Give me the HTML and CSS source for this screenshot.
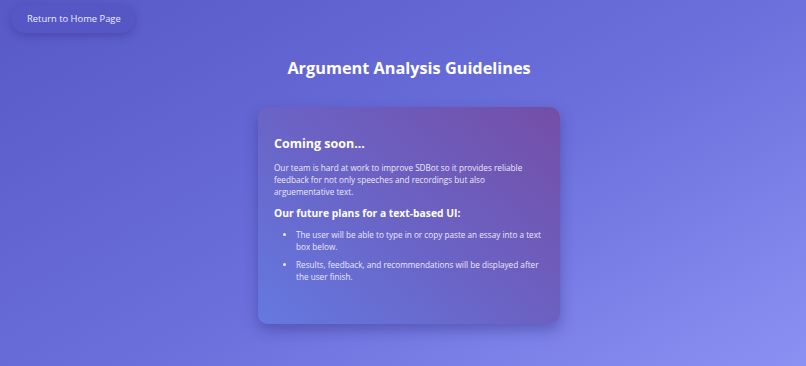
FILE: index.html
```html
<!DOCTYPE html>
<html lang="en">
<head>
    <meta charset="UTF-8">
    <title>Argument Analysis Guidelines</title>
    <link rel="stylesheet" href="styles.css">
</head>
<body>
    <div class="top-bar">
        <button class="home-btn">Return to Home Page</button>
    </div>

    <div class="page">
        <h1 class="page-title">Argument Analysis Guidelines</h1>

        <div class="card">
            <h2>Coming soon...</h2>
            <p>Our team is hard at work to improve SDBot so it provides reliable feedback for not only speeches and recordings but also arguementative text.</p>
            <h3>Our future plans for a text-based UI:</h3>
            <ul>
                <li>The user will be able to type in or copy paste an essay into a text box below.</li>
                <li>Results, feedback, and recommendations will be displayed after the user finish.</li>
            </ul>
        </div>
    </div>
</body>
</html>
```

FILE: styles.css
```css
html, body {
    height: 100%;
}
body {
    margin: 0;
    font-family: "Open Sans", "Noto Sans", sans-serif;
    background: linear-gradient(150deg, #5859c6 0%, #6b70dc 55%, #8b91f3 100%);
    color: white;
    overflow: hidden;
}
.top-bar {
    padding: 4px 11px;
}
.home-btn {
    font-family: inherit;
    font-size: 9.4px;
    white-space: nowrap;
    color: #ececff;
    background: #5657c5;
    border: none;
    border-radius: 15px;
    padding: 0 16px;
    height: 29px;
    width: 124px;
    box-shadow: 0 3px 8px rgba(40,30,120,0.3);
    cursor: pointer;
}
.page {
    display: flex;
    flex-direction: column;
    align-items: center;
    padding-left: 12px;
}
.page-title {
    font-size: 16.3px;
    font-weight: 700;
    margin: 20px 0 28px;
}
.card {
    width: 270px;
    padding: 28px 16px 35px;
    border-radius: 10px;
    background: linear-gradient(40deg, #6479e0 0%, #6b62c4 50%, #744ea7 100%);
    box-shadow: 0 6px 14px rgba(40,30,110,0.35);
}
.card h2 {
    font-size: 12.5px;
    font-weight: 700;
    margin: 0 0 10px;
}
.card p {
    font-size: 8.2px;
    line-height: 12px;
    margin: 0 0 8px;
    color: #ece8fa;
}
.card h3 {
    font-size: 10.3px;
    font-weight: 700;
    margin: 0 0 9px;
}
.card ul {
    margin: 0;
    padding-left: 22px;
    font-size: 8.2px;
    line-height: 12px;
    color: #ece8fa;
}
.card li {
    margin-bottom: 6px;
}
```
